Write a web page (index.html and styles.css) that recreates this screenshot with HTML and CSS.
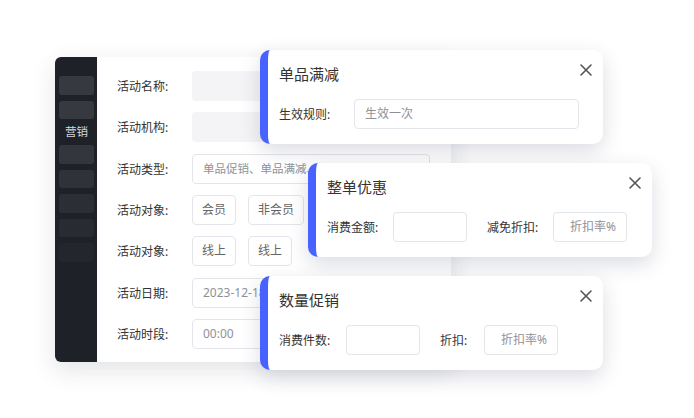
FILE: index.html
```html
<!DOCTYPE html>
<html lang="zh-CN">
<head>
<meta charset="utf-8">
<link rel="stylesheet" href="styles.css">
</head>
<body>
<div class="stage">
  <div class="panel">
    <div class="side">
      <div class="side-item s1"></div>
      <div class="side-item s1"></div>
      <div class="side-text">营销</div>
      <div class="side-item s3"></div>
      <div class="side-item s4"></div>
      <div class="side-item s5"></div>
      <div class="side-item s6"></div>
      <div class="side-item s7"></div>
    </div>
    <div class="form">
      <div class="row"><span class="label">活动名称:</span><div class="fill"></div></div>
      <div class="row"><span class="label">活动机构:</span><div class="fill"></div></div>
      <div class="row"><span class="label">活动类型:</span><div class="box wide">单品促销、单品满减、</div></div>
      <div class="row"><span class="label">活动对象:</span><div class="btn b44">会员</div><div class="btn b56">非会员</div></div>
      <div class="row"><span class="label">活动对象:</span><div class="btn b44">线上</div><div class="btn b44">线上</div></div>
      <div class="row"><span class="label">活动日期:</span><div class="box mid">2023-12-18</div></div>
      <div class="row"><span class="label">活动时段:</span><div class="box mid">00:00</div></div>
    </div>
  </div>

  <div class="card card1">
    <div class="card-head">
      <span class="card-title">单品满减</span>
      <svg class="close" width="12" height="12" viewBox="0 0 12 12"><path d="M1 1L11 11M11 1L1 11" stroke="#555" stroke-width="1.6" fill="none" stroke-linecap="round"/></svg>
    </div>
    <div class="card-row">
      <span class="clabel w75">生效规则:</span>
      <div class="cinput grow">生效一次</div>
    </div>
  </div>

  <div class="card card2">
    <div class="card-head">
      <span class="card-title">整单优惠</span>
      <svg class="close" width="12" height="12" viewBox="0 0 12 12"><path d="M1 1L11 11M11 1L1 11" stroke="#555" stroke-width="1.6" fill="none" stroke-linecap="round"/></svg>
    </div>
    <div class="card-row">
      <span class="clabel w66">消费金额:</span>
      <div class="cinput small"></div>
      <span class="clabel w66 gapl">减免折扣:</span>
      <div class="cinput small center">折扣率%</div>
    </div>
  </div>

  <div class="card card3">
    <div class="card-head">
      <span class="card-title">数量促销</span>
      <svg class="close" width="12" height="12" viewBox="0 0 12 12"><path d="M1 1L11 11M11 1L1 11" stroke="#555" stroke-width="1.6" fill="none" stroke-linecap="round"/></svg>
    </div>
    <div class="card-row">
      <span class="clabel w67">消费件数:</span>
      <div class="cinput small"></div>
      <span class="clabel w44 gapl">折扣:</span>
      <div class="cinput small center">折扣率%</div>
    </div>
  </div>
</div>
</body>
</html>
```

FILE: styles.css
```css
* { box-sizing: border-box; }
html, body { margin: 0; padding: 0; background: #ffffff; }
body {
  font-family: "Noto Sans", "Noto Sans CJK SC", sans-serif;
  color: #333;
}
.stage {
  position: relative;
  width: 694px;
  height: 418px;
  overflow: hidden;
  padding-top: 57px;
  padding-left: 55px;
}
.panel {
  display: flex;
  width: 396px;
  height: 305px;
  background: #fff;
  border-radius: 6px;
  box-shadow: 0 8px 24px rgba(30, 36, 60, 0.13);
  overflow: hidden;
}
.side {
  width: 42px;
  background: #1f2128;
  padding: 19px 3px 0 4px;
  display: flex;
  flex-direction: column;
  gap: 6px;
}
.side-item {
  height: 18.5px;
  border-radius: 3px;
}
.s1 { background: #373941; }
.s3 { background: #34363e; }
.s4 { background: #30323a; }
.s5 { background: #2c2e36; }
.s6 { background: #292b32; }
.s7 { background: #24262d; }
.side-text {
  height: 14px;
  line-height: 14px;
  font-size: 11.5px;
  color: #d4d6da;
  text-align: center;
}
.form {
  flex: 1;
  padding: 14px 0 0 20px;
  display: flex;
  flex-direction: column;
  gap: 11.33px;
}
.row {
  display: flex;
  align-items: center;
  height: 30px;
}
.label {
  width: 75px;
  font-size: 12px;
  color: #333;
}
.fill {
  width: 238px;
  height: 30px;
  border-radius: 4px;
  background: #f4f4f6;
}
.box {
  height: 30px;
  border: 1px solid #e4e5ea;
  border-radius: 4px;
  font-size: 12px;
  color: #8f9196;
  line-height: 28px;
  padding-left: 10px;
  white-space: nowrap;
  overflow: hidden;
}
.wide { width: 238px; font-size: 11.5px; }
.mid { width: 130px; }
.btn {
  height: 30px;
  border: 1px solid #e4e5ea;
  border-radius: 4px;
  font-size: 12px;
  color: #666;
  line-height: 28px;
  text-align: center;
  margin-right: 12px;
}
.b44 { width: 44px; }
.b56 { width: 56px; }

.card {
  position: absolute;
  height: 94px;
  background: #fff;
  border-left: 8px solid #4862ff;
  border-radius: 10px;
  box-shadow: 0 7px 20px rgba(40, 50, 90, 0.17);
  padding: 14px 11px 0 11px;
  display: flex;
  flex-direction: column;
}
.card1 { left: 260px; top: 50px; width: 343px; }
.card2 { left: 308px; top: 163px; width: 344px; }
.card3 { left: 260px; top: 276px; width: 343px; }
.card-head {
  display: flex;
  justify-content: space-between;
  align-items: flex-start;
  height: 20px;
}
.card-title {
  font-size: 15px;
  line-height: 20px;
  color: #333;
}
.close { margin-top: 0px; }
.card-row {
  margin-top: 15px;
  display: flex;
  align-items: center;
  height: 30px;
  padding-right: 13px;
}
.clabel {
  font-size: 12px;
  color: #333;
  flex: none;
}
.w75 { width: 75px; }
.w66 { width: 66px; }
.w67 { width: 67px; }
.w44 { width: 44px; }
.gapl { margin-left: 20px; }
.cinput {
  height: 30px;
  border: 1px solid #e4e5ea;
  border-radius: 4px;
  font-size: 12px;
  color: #8f9196;
  line-height: 28px;
  padding-left: 10px;
}
.grow { flex: 1; }
.small { width: 74px; flex: none; }
.center { text-align: center; padding-left: 6px; }
```
